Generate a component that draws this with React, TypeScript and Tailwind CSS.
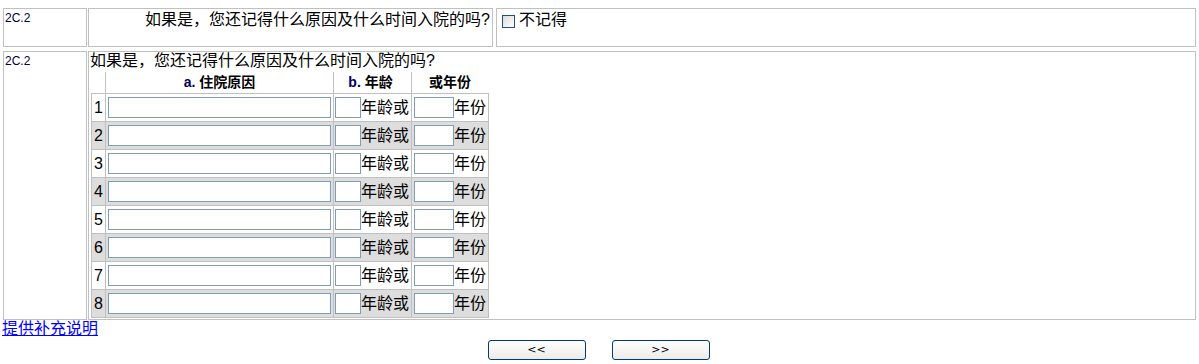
import React from "react";

const rows = [1, 2, 3, 4, 5, 6, 7, 8];

function Row({ n }: { n: number }) {
  const even = n % 2 === 0;
  return (
    <div
      className={
        even
          ? "flex h-[28px] border-t border-[#c0c0c0] bg-[#dddddd]"
          : "flex h-[28px] border-t border-[#c0c0c0] bg-white"
      }
    >
      <div className="w-[13px] pl-[2px] flex items-center text-[16px] leading-[18px] text-black">
        {n}
      </div>
      <div className="w-[228px] border-l border-[#c0c0c0] flex items-center pl-[2px]">
        <div className="w-[223px] h-[21px] border border-[#7f9db9] bg-white" />
      </div>
      <div className="w-[78px] border-l border-[#c0c0c0] flex items-center pl-[1px]">
        <div className="w-[26px] h-[21px] border border-[#7f9db9] bg-white shrink-0" />
        <span className="text-[16px] leading-[18px] whitespace-nowrap">年龄或</span>
      </div>
      <div className="w-[77px] border-l border-[#c0c0c0] flex items-center pl-[2px]">
        <div className="w-[40px] h-[21px] border border-[#7f9db9] bg-white shrink-0" />
        <span className="text-[16px] leading-[18px] whitespace-nowrap">年份</span>
      </div>
    </div>
  );
}

export default function App() {
  return (
    <div className="w-[1199px] h-[364px] bg-white text-black font-['Liberation_Sans','Noto_Sans_CJK_SC',sans-serif] overflow-hidden">
      {/* top row */}
      <div className="flex pl-[3px] pt-[8px]">
        <div className="w-[84px] h-[39px] border border-[#c0c0c0] pl-[1px] pt-[3px] text-[12px] leading-[13px] text-[#000040]">
          2C.2
        </div>
        <div className="ml-[1px] w-[405px] h-[39px] border border-[#c0c0c0] pr-[2px] pt-[2px] text-right text-[16px] leading-[18px] whitespace-nowrap">
          如果是，您还记得什么原因及什么时间入院的吗?
        </div>
        <div className="ml-[3px] w-[700px] h-[39px] border border-[#c0c0c0] pl-[5px] pt-[2px] flex items-start">
          <div className="mt-[4px] w-[13px] h-[13px] border border-[#1c5180] bg-gradient-to-br from-[#dcdcd7] to-white shrink-0" />
          <span className="ml-[4px] text-[16px] leading-[18px]">不记得</span>
        </div>
      </div>

      {/* second row */}
      <div className="flex pl-[3px] mt-[4px]">
        <div className="w-[84px] h-[269px] border border-[#c0c0c0] pl-[1px] pt-[3px] text-[12px] leading-[13px] text-[#000040]">
          2C.2
        </div>
        <div className="ml-[1px] w-[1108px] h-[269px] border border-[#c0c0c0] pl-[1px]">
          <div className="text-[16px] leading-[18px] whitespace-nowrap">
            如果是，您还记得什么原因及什么时间入院的吗?
          </div>
          <div className="ml-[1px] w-[398px]">
            <div className="flex mt-[2px] h-[21px] font-bold text-[14px] leading-[20px]">
              <div className="w-[14px]" />
              <div className="w-[228px] border-l border-[#c0c0c0] text-center">
                <span className="text-[#000060]">a.</span> 住院原因
              </div>
              <div className="w-[78px] border-l border-[#c0c0c0] text-center pr-[4px]">
                <span className="text-[#000060]">b.</span> 年龄
              </div>
              <div className="w-[77px] border-l border-[#c0c0c0] text-center">
                或年份
              </div>
            </div>
            <div className="border-l border-r border-b border-[#c0c0c0]">
              {rows.map((n) => (
                <Row key={n} n={n} />
              ))}
            </div>
          </div>
        </div>
      </div>

      {/* link */}
      <div className="pl-[2px] text-[16px] leading-[18px]">
        <a href="#" className="text-[#0000ff] underline">
          提供补充说明
        </a>
      </div>

      {/* buttons */}
      <div className="flex justify-center gap-[26px] mt-[2px] pr-[2px]">
        <button className="w-[98px] h-[20px] rounded-[3px] border border-[#003c74] bg-gradient-to-b from-white to-[#ecebe6] text-[11px] leading-[18px] text-black font-['DejaVu_Sans',sans-serif]">
          &lt;&lt;
        </button>
        <button className="w-[98px] h-[20px] rounded-[3px] border border-[#003c74] bg-gradient-to-b from-white to-[#ecebe6] text-[11px] leading-[18px] text-black font-['DejaVu_Sans',sans-serif]">
          &gt;&gt;
        </button>
      </div>
    </div>
  );
}
